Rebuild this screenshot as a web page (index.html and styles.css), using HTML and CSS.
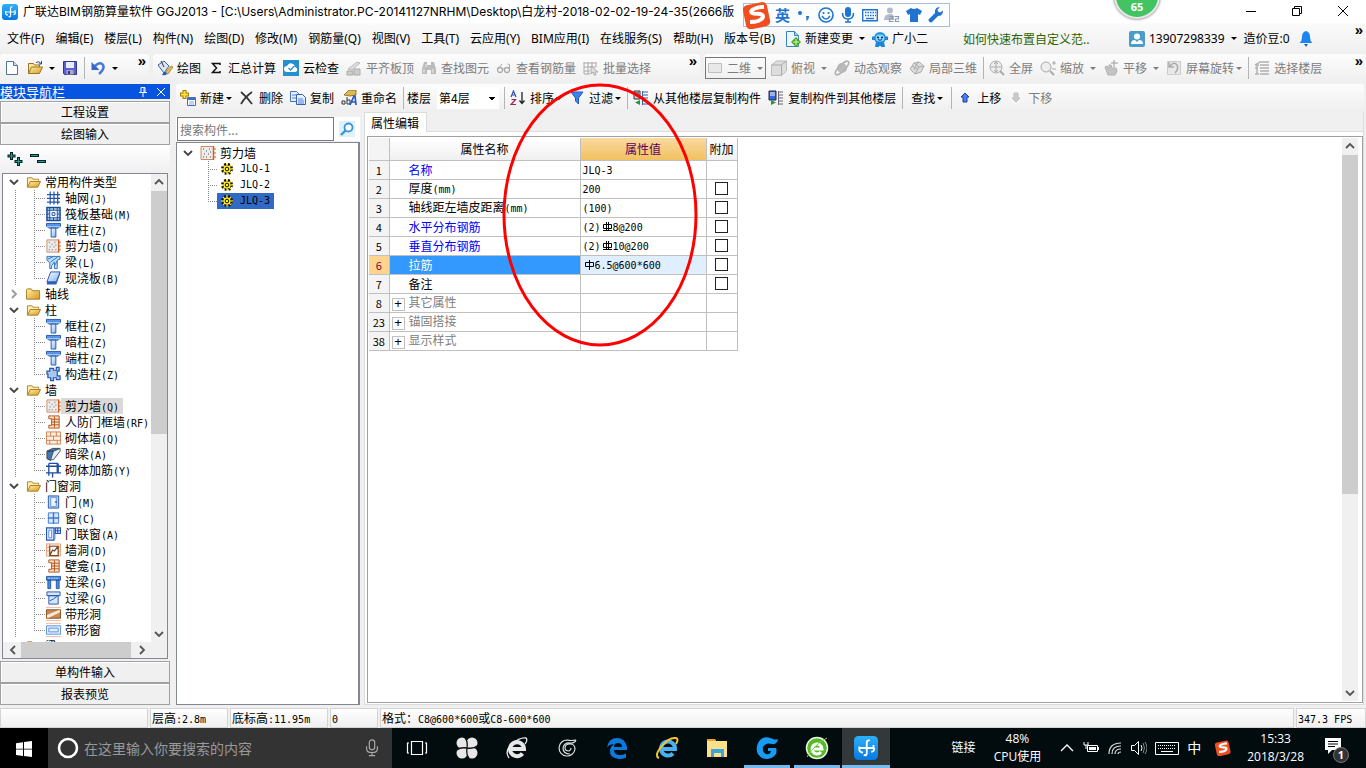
FILE: index.html
```
<!DOCTYPE html>
<html lang="zh-CN">
<head>
<meta charset="utf-8">
<title>广联达BIM钢筋算量软件 GGJ2013</title>
<link rel="stylesheet" href="styles.css">
</head>
<body>
<svg class="defs" aria-hidden="true">
<defs>
<linearGradient id="gBlue" x2="0" y2="1"><stop offset="0" stop-color="#2cb0f8"/><stop offset="1" stop-color="#0878e0"/></linearGradient>
<linearGradient id="gFold" x2="1" y2="1"><stop offset="0" stop-color="#fff0a8"/><stop offset="1" stop-color="#d89a20"/></linearGradient>
<linearGradient id="gGlass" x2="1" y2="1"><stop offset="0" stop-color="#fff"/><stop offset="1" stop-color="#7fb2f0"/></linearGradient>
</defs>
<symbol id="app" viewBox="0 0 16 16"><rect width="16" height="16" rx="3" fill="url(#gBlue)"/><path d="M6.500 12.500q2 1 2-1V4.500q0-2 2-1.500M3.500 7v1h9.500V6M3.500 8.500q0 2.500 2.500 2.500M11.500 10.500q2 0 2-2.500" fill="none" stroke="#fff" stroke-width="1.200"/></symbol>
<symbol id="doc" viewBox="0 0 16 16"><path d="M2.500 1.500h7l4 4v9h-11z" fill="#fff" stroke="#5570a0"/><path d="M9.500 1.500v4h4" fill="#cfe0f8" stroke="#5570a0"/></symbol>
<symbol id="open" viewBox="0 0 16 16"><path d="M1.500 13.500v-10h5l1 1.500h5v2" fill="#ffe79a" stroke="#9b7420"/><path d="M1.500 13.500l3-6.500h11l-3 6.500z" fill="url(#gFold)" stroke="#9b7420"/><path d="M9 2.500q3-2 5 1M14.500 1v3h-3" fill="none" stroke="#446"/></symbol>
<symbol id="fold" viewBox="0 0 16 16"><path d="M1.500 13.500v-10h5l1 1.500h6v2" fill="#ffeeb0" stroke="#b08428"/><path d="M1.500 13.500l3-6h11l-3 6z" fill="url(#gFold)" stroke="#a87a20"/></symbol>
<symbol id="foldc" viewBox="0 0 16 16"><path d="M.500 13.500v-10l1-1h4l1.500 2h7.500v9z" fill="url(#gFold)" stroke="#a87a20"/></symbol>
<symbol id="save" viewBox="0 0 16 16"><path d="M1.500 1.500h13v13h-12l-1-1z" fill="#5a60d0" stroke="#303690"/><path d="M4 2h8v6H4z" fill="#e8ecff"/><path d="M4.500 10h7v4.500h-7z" fill="#aab"/><path d="M6 11h2v3H6z" fill="#303690"/></symbol>
<symbol id="undo" viewBox="0 0 16 16"><path d="M5 6q5-5 8-1 2 4-4 9" fill="none" stroke="#4a7ad8" stroke-width="2.600"/><path d="M1.500 2v8h8z" fill="#3566c8"/></symbol>
<symbol id="paint" viewBox="0 0 16 16"><path d="M1 5l6-4 5 5-5 7z" fill="#dbe5f5" stroke="#406090"/><path d="M4 1l3 6" stroke="#333"/><path d="M8 13l6-7 2 1-5 7z" fill="#e8c050" stroke="#806010" stroke-width=".6"/><path d="M5 15q2-5 5-2 0 3-5 2z" fill="#2460b8"/></symbol>
<symbol id="sigma" viewBox="0 0 16 16"><path d="M12 5V3.500H4.500L8.500 8l-4 4.500H12V11" fill="none" stroke="#111" stroke-width="1.500"/></symbol>
<symbol id="cloud" viewBox="0 0 16 16"><rect width="16" height="16" fill="#258fd0"/><path d="M4 12a3 3 0 0 1 0-6q2-4 6-2 2 1 2 3 3 1 2 4-1 1-2 1z" fill="#fff"/><path d="M5.500 8l2 2 4-4" fill="none" stroke="#258fd0" stroke-width="1.300"/></symbol>
<symbol id="slab" viewBox="0 0 16 16"><path d="M2 9l9-7 3 1-8 7z" fill="#ddd" stroke="#bbb"/><path d="M1 11h6v4H1zM8 9h6v6H8z" fill="#ccc" stroke="#aaa"/></symbol>
<symbol id="bino" viewBox="0 0 16 16"><path d="M3 2h3v3h4V2h3l2 7v5h-5v-4H6v4H1V9z" fill="#bbb"/><path d="M3 9v4M12 9v4M5 4v3" stroke="#eee"/></symbol>
<symbol id="glasses" viewBox="0 0 16 16"><circle cx="4" cy="10" r="2.500" fill="none" stroke="#aaa" stroke-width="1.300"/><circle cx="11" cy="10" r="2.500" fill="none" stroke="#aaa" stroke-width="1.300"/><path d="M2 9l4-5M13.500 10V4.500l-2-.5M6.500 9h2" fill="none" stroke="#aaa"/></symbol>
<symbol id="batch" viewBox="0 0 16 16"><path d="M1 2v12M5 2v12M9 2v5M1 3h12M1 7h12M1 11h6M1 14h6M13 2v5" stroke="#aaa" fill="none"/><path d="M8 6l7 6h-3l1 3h-2l-1-3-2 2z" fill="#ddd" stroke="#999" stroke-width=".7"/></symbol>
<symbol id="rect" viewBox="0 0 16 16"><path d="M1.500 3.500h13v9h-13z" fill="#e8e8e8" stroke="#c0c0c0"/></symbol>
<symbol id="cube" viewBox="0 0 16 16"><path d="M.500 5l5-4h10v10l-5 4.500H.500z" fill="#ddd" stroke="#bbb"/><path d="M.500 5h10v10.500M10.500 5l5-4" stroke="#aaa" fill="none"/></symbol>
<symbol id="orbit" viewBox="0 0 16 16"><circle cx="8" cy="8" r="5" fill="#bbb"/><ellipse cx="8" cy="8" rx="9" ry="3" transform="rotate(-45 8 8)" fill="none" stroke="#b4b4b4" stroke-width="1.500"/></symbol>
<symbol id="part" viewBox="0 0 16 16"><path d="M1 9l4-6 5-1 5 4-3 6-6 2z" fill="#ddd" stroke="#aaa"/><path d="M5 3l5 4-4 7M10 7l5-1M3 6l6 3M9 2l-4 8" stroke="#aaa" fill="none"/></symbol>
<symbol id="full" viewBox="0 0 16 16"><circle cx="7" cy="7" r="6" fill="#eee" stroke="#aaa"/><path d="M7 2v10M2 7h10M5 4l2-2 2 2M5 10l2 2 2-2" fill="none" stroke="#aaa"/><path d="M11 11l4 4" stroke="#aaa" stroke-width="2"/></symbol>
<symbol id="zoom" viewBox="0 0 16 16"><circle cx="6" cy="7" r="5" fill="#eee" stroke="#aaa"/><path d="M10 11l4 4" stroke="#aaa" stroke-width="2"/><path d="M12 3h4M14 1v4M12 9h4" stroke="#aaa"/></symbol>
<symbol id="pan" viewBox="0 0 16 16"><path d="M2 7l2-1 2 3V5h2l1 3h4l1 3-2 4H5z" fill="#c4c4c4" stroke="#b0b0b0"/><path d="M11 0v7M8 3h7" stroke="#999"/></symbol>
<symbol id="rot" viewBox="0 0 16 16"><path d="M1.500 1.500h13v13h-13z" fill="#e8e8e8" stroke="#ccc"/><path d="M4 6q4-5 7-1 2 4-2 8M3 2v5h5" fill="none" stroke="#aaa" stroke-width="1.500"/></symbol>
<symbol id="floors" viewBox="0 0 16 16"><path d="M1 5l5-3h9M1 5h4M6 5h9M6 8h9M6 11h9M6 14h9M1 8h3M3 5v9M1 14h4" stroke="#b0b0b0" stroke-width="1.400" fill="none"/></symbol>
<symbol id="new" viewBox="0 0 16 16"><path d="M4.500 0v9M0 4.500h9" stroke="#a08000" stroke-width="4"/><path d="M4.500 1v7M1 4.500h7" stroke="#ffe040" stroke-width="2"/><path d="M7.500 7.500h8v8h-8z" fill="#fff" stroke="#4070c0"/><path d="M8 9h7" stroke="#4070c0" stroke-width="2"/><path d="M9 12h5M9 14h5" stroke="#88a8e0"/></symbol>
<symbol id="x" viewBox="0 0 16 16"><path d="M2 2q6 5 11 12M13 2Q6 7 2 14" fill="none" stroke="#333" stroke-width="1.700"/></symbol>
<symbol id="copy" viewBox="0 0 16 16"><path d="M.500 1.500h6l3 3v7h-9z" fill="#e5efff" stroke="#4a70b8"/><path d="M6.500 4.500h6l3 3v7h-9z" fill="#e5efff" stroke="#3560b0"/><path d="M2 5h4M2 8h4M8 9h5M8 11h6M8 13h6" stroke="#5580d0"/></symbol>
<symbol id="rename" viewBox="0 0 16 16"><path d="M3 5l5-5h7v5l-6 1z" fill="#e0b850" stroke="#806020" stroke-width=".8"/><path d="M1 14v-3h3v3zM6 7v7h3v-4H6" fill="none" stroke="#333"/><path d="M9 15l4-9h1l1 9M11 12h4" fill="none" stroke="#2558c0" stroke-width="1.700"/></symbol>
<symbol id="sort" viewBox="0 0 16 16"><path d="M1 7l2.500-6L6 7M2 5h3" fill="none" stroke="#3050b0" stroke-width="1.200"/><path d="M1.500 9.500h4L1 14.500h5" fill="none" stroke="#a02050" stroke-width="1.200"/><path d="M12 2v11M9.500 10.500l2.500 3 2.500-3" fill="none" stroke="#222" stroke-width="1.300"/></symbol>
<symbol id="filter" viewBox="0 0 16 16"><path d="M2 2h12l-4.500 6v6L6.500 11V8z" fill="#3d82e8" stroke="#205cc0"/></symbol>
<symbol id="cpf" viewBox="0 0 16 16"><path d="M1 1h6v8H1z" fill="#ccd" stroke="#334"/><path d="M9 2h6M9 5h6M9 8h6M9 11h6M9 14h6M9.500 1v14" stroke="#3a62aa"/><path d="M2 3h4M2 5h4" stroke="#333"/><path d="M7 10v5l-5-2.500z" fill="#1a9c30"/></symbol>
<symbol id="cpt" viewBox="0 0 16 16"><path d="M1 1h7v9H1z" fill="#3768d8" stroke="#224"/><path d="M2 3h5M2 5h5" stroke="#fff"/><path d="M10 2h5M10 5h5M10 8h5M10 11h5M10 14h5M10.500 1v14" stroke="#667"/><path d="M3 10v5l5-2.500z" fill="#1a9c30"/></symbol>
<symbol id="up" viewBox="0 0 16 16"><path d="M8 3l4 4h-2v5H6V7H4z" fill="#4a80f0" stroke="#1c3c98"/></symbol>
<symbol id="down" viewBox="0 0 16 16"><path d="M8 12l4-4h-2V3H6v5H4z" fill="#ccc" stroke="#bbb"/></symbol>
<symbol id="docadd" viewBox="0 0 16 16"><path d="M1.500.500h8l4 4v11h-12z" fill="#eaf6ff" stroke="#3a80b8"/><path d="M9.500.500v4h4" fill="#9cd0f0" stroke="#3a80b8"/><path d="M11 6l5 5-5 5-5-5z" fill="#48a818"/><path d="M11 8v6M8 11h6" stroke="#dff5c8"/></symbol>
<symbol id="mascot" viewBox="0 0 16 16"><circle cx="8" cy="7" r="6" fill="#2196e8"/><path d="M0 5.500h16v3.500H0zM4 11h8l1 5H9v-1H7v1H3z" fill="#1a86d8"/><ellipse cx="8" cy="7" rx="4.500" ry="3.500" fill="#8fd6ff"/><circle cx="6" cy="6.500" r="1" fill="#123"/><circle cx="10" cy="6.500" r="1" fill="#123"/><path d="M6 8.500q2 1.500 4 0" stroke="#135" fill="none"/></symbol>
<symbol id="user" viewBox="0 0 16 16"><rect width="16" height="16" rx="2" fill="#4a9dc8"/><circle cx="8" cy="5.500" r="3" fill="#fff"/><path d="M2 13q0-4 4-4l2 2 2-2q4 0 4 4z" fill="#fff"/></symbol>
<symbol id="bell" viewBox="0 0 16 16"><path d="M8 0q4 1 4 6 0 4 2.500 6h-13Q4 10 4 6q0-5 4-6z" fill="#1b86f0"/><path d="M6 13h4l-2 3z" fill="#1b60c0"/></symbol>
<symbol id="pin" viewBox="0 0 10 10"><path d="M3 .500h4v5H3zM6 1v4M1 5.500h8M5 6v4" fill="none" stroke="#fff"/></symbol>
<symbol id="close" viewBox="0 0 10 10"><path d="M1 1l8 8M9 1L1 9" fill="none" stroke="currentColor"/></symbol>
<symbol id="plus2" viewBox="0 0 16 16"><path d="M4.500 1v8M.500 5h8M11.500 6v9M7.500 10.500h8" stroke="#022" stroke-width="3"/><path d="M4.500 2v6M1.500 5h6M11.500 7v7M8.500 10.500h6" stroke="#2a9a90"/></symbol>
<symbol id="minus2" viewBox="0 0 16 16"><path d="M0 4.500h9M7 10.500h9" stroke="#022" stroke-width="3"/><path d="M1 4.500h7M8 10.500h7" stroke="#2a9a90"/></symbol>
<symbol id="cdown" viewBox="0 0 10 10"><path d="M1 3l4 4 4-4" fill="none" stroke="currentColor" stroke-width="1.800"/></symbol>
<symbol id="grid" viewBox="0 0 16 16"><path d="M4.500 1v14M8.500 1v14M12.500 1v14M1 4.500h14M1 8.500h14M1 12.500h14" stroke="#2456a8" stroke-width="1.300"/></symbol>
<symbol id="raft" viewBox="0 0 16 16"><path d="M1 1h14v14H1z" fill="#b8d8f8" stroke="#1c4c98" stroke-width="1.600"/><path d="M4 4h8v8H4zM6.500 6.500h3v3h-3zM4 1v3M8 1v3M12 1v3M4 12v3M8 12v3M12 12v3M1 4h3M1 8h3M1 12h3M12 4h3M12 8h3M12 12h3" fill="#fff" stroke="#1c4c98"/></symbol>
<symbol id="col" viewBox="0 0 16 16"><path d="M.500 1h15v3l-3 2h-9l-3-2z" fill="#5a94e4" stroke="#2456a8"/><path d="M1 4.500h14" stroke="#bcd8ff"/><path d="M5.500 6h5v9.500h-5z" fill="url(#gGlass)" stroke="#2456a8"/></symbol>
<symbol id="wall" viewBox="0 0 16 16"><path d="M1 1.500h12.500v13H1z" fill="#ececec" stroke="#d08868"/><path d="M13.500 1v14" stroke="#d06020" stroke-width="1.500"/><path d="M13 4h3M13 8h3M13 12h3" stroke="#d06020"/><path d="M3 4h1M6 6h1M9 4h1M4 9h1M8 9h1M6 12h1M3 12h1M10 12h1M10 7h1" stroke="#555"/></symbol>
<symbol id="beam" viewBox="0 0 16 16"><path d="M1 2h14v3l-3 1v9H9V8l-3 4v3H4V9L1 6z" fill="#b8dcf8" stroke="#3070c0"/><path d="M2 5l6-3M5 8l8-6M9 12l3-5" stroke="#3070c0"/></symbol>
<symbol id="plate" viewBox="0 0 16 16"><path d="M1 12v3h10l4-11V1.500L11 12z" fill="#2a62c0"/><path d="M5 1.500h10l-4 10.500H1z" fill="url(#gGlass)" stroke="#2456a8"/></symbol>
<symbol id="ccol" viewBox="0 0 16 16"><path d="M4 2h4v2h3V1h3v4h-2v5h3v4h-4v-2H8v3H5v-3H2V8H1V5h3z" fill="#a8c8f4" stroke="#2456a8" stroke-width="1.300"/></symbol>
<symbol id="ibeam" viewBox="0 0 16 16"><path d="M3 1.500h11v13H3v-3h3v-7H3zM9 2v12M6 5h8M6 8h8M6 11h8" fill="#fbe3cf" stroke="#b05018"/></symbol>
<symbol id="brick" viewBox="0 0 16 16"><path d="M.500 1.500h15v13H.500zM.500 6h15M.500 10.500h15M5 1.500V6M11 1.500V6M8 6v4.500M4 10.500v4M12 10.500v4" fill="#fdeee0" stroke="#d08050"/></symbol>
<symbol id="dbeam" viewBox="0 0 16 16"><path d="M1 5l6-3h8l-7 3zM1 5h7v3l-3 7-4-2z" fill="#4676b0" stroke="#345"/><path d="M8 5l7-3v3l-7 9H5z" fill="#e4eef8" stroke="#456"/></symbol>
<symbol id="rebar" viewBox="0 0 16 16"><path d="M0 4h16M0 11h16M3 1v13M13 1v10M6 1h6v10H7v5M3 1h6" stroke="#1c4ca8" fill="none" stroke-width="1.400"/></symbol>
<symbol id="door" viewBox="0 0 16 16"><path d="M2.500 1.500h11v13h-11z" fill="#b8d4fa" stroke="#2456a8"/><path d="M5 3h6v10H5z" fill="#e8f2ff" stroke="#6090d8"/><path d="M9.500 8h2" stroke="#124"/></symbol>
<symbol id="win" viewBox="0 0 16 16"><path d="M2.500 2.500h11v11h-11z" fill="#d8e8ff" stroke="#3a78d0"/><path d="M8 2v12M2 8h12" stroke="#3a78d0" stroke-width="1.500"/></symbol>
<symbol id="dwin" viewBox="0 0 16 16"><path d="M.500 1.500h8v13h-8zM10 1.500h5.500v6H10zM12.500 2v5M10 4.500h5" fill="#d8e8ff" stroke="#2456b8" stroke-width="1.200"/><path d="M3 4h3v8H3zM9.500 8v6" fill="#fff" stroke="#5a8cdc"/></symbol>
<symbol id="hole" viewBox="0 0 16 16"><path d="M.500 1.500h15v13H.500zM0 5h16M0 9h16M4 1v4" fill="#fbe8d8" stroke="#e0a080"/><path d="M4 4h9v10H4zM4 14l3-6 2 1 4-5" fill="#fff" stroke="#74441c" stroke-width="1.300"/></symbol>
<symbol id="lbeam" viewBox="0 0 16 16"><path d="M.500 2h15v4H.500zM2 6h3v9H2zM11 6h3v9h-3z" fill="#4d8adf" stroke="#2456a8"/><path d="M2 4h12" stroke="#cde" stroke-dasharray="2 1"/></symbol>
<symbol id="gbeam" viewBox="0 0 16 16"><path d="M1 1.500h14v4H1zM3 5.500h10v9H3z" fill="#d4e6ff" stroke="#2456a8"/><path d="M4 11l4-2 4-3" stroke="#2456a8" fill="none"/></symbol>
<symbol id="strip" viewBox="0 0 16 16"><path d="M.500 3.500h15v9H.500z" fill="#c98a58" stroke="#8a4a18"/><path d="M1 9l12-5h2v2L3 12H1z" fill="#f8e8d8"/><path d="M0 1h16M0 15h16" stroke="#f0b8a0"/></symbol>
<symbol id="swin" viewBox="0 0 16 16"><path d="M.500 3.500h15v9H.500zM3 6h10v4H3z" fill="#e4efff" stroke="#5a90e0"/><path d="M0 1h16M0 15h16" stroke="#f0b8a0"/></symbol>
<symbol id="gear" viewBox="0 0 16 16"><circle cx="8" cy="8" r="5" fill="none" stroke="#111" stroke-width="2" stroke-dasharray="2 2"/><circle cx="8" cy="8" r="4" fill="#ffee20" stroke="#554c00"/><path d="M8 2v12M2 8h12M4 4l8 8M12 4l-8 8" stroke="#ffee20"/><circle cx="8" cy="8" r="1.800" fill="#ffee20" stroke="#111"/></symbol>
<symbol id="mag" viewBox="0 0 16 16"><path d="M0 0h16v16H0z" fill="#e0f1fc"/><circle cx="9.500" cy="6.500" r="4" fill="#fff" stroke="#3a94dc" stroke-width="1.800"/><path d="M6.500 9.500L2 14" stroke="#3a94dc" stroke-width="2.400"/></symbol>
<symbol id="mic" viewBox="0 0 16 20"><rect x="5" y="1" width="6" height="11" rx="3" fill="none" stroke="currentColor" stroke-width="1.300"/><path d="M2 8v3q0 4 6 4t6-4V8M8 15v4M4.500 18.500h7" fill="none" stroke="currentColor" stroke-width="1.300"/></symbol>
<symbol id="sogou" viewBox="0 0 24 24"><rect x="1" y="2" width="21" height="21" rx="4" transform="rotate(-12 12 12)" fill="#f04e20"/><path d="M18 5q-10 1-11 4 0 2 5 2 6 0 5 3-2 4-11 4" fill="none" stroke="#fff" stroke-width="3.400"/></symbol>
</svg>

<header class="title">
  <svg class="ic"><use href="#app"/></svg>
  <h1>广联达BIM钢筋算量软件 GGJ2013 - [C:\Users\Administrator.PC-20141127NRHM\Desktop\白龙村-2018-02-02-19-24-35(2666版</h1>
  <div class="winbtns">
    <button aria-label="最小化"><svg viewBox="0 0 12 12"><path d="M1 6.500h10" stroke="#000"/></svg></button>
    <button aria-label="还原"><svg viewBox="0 0 12 12"><path d="M1.500 3.500h7v7h-7zM3.500 3V1.500h7v7H9" fill="none" stroke="#000"/></svg></button>
    <button aria-label="关闭"><svg viewBox="0 0 12 12"><path d="M1 1l10 10M11 1L1 11" stroke="#000"/></svg></button>
  </div>
</header>

<nav class="menubar">
  <div class="menus">
    <button>文件(F)</button><button>编辑(E)</button><button>楼层(L)</button><button>构件(N)</button><button>绘图(D)</button><button>修改(M)</button><button>钢筋量(Q)</button><button>视图(V)</button><button>工具(T)</button><button>云应用(Y)</button><button>BIM应用(I)</button><button>在线服务(S)</button><button>帮助(H)</button><button>版本号(B)</button>
  </div>
  <button class="tb"><svg class="ic"><use href="#docadd"/></svg>新建变更<i class="arr"></i></button>
  <button class="tb"><svg class="ic"><use href="#mascot"/></svg>广小二</button>
  <a class="tip" href="#">如何快速布置自定义范..</a>
  <div class="account">
    <button class="tb"><svg class="ic"><use href="#user"/></svg>13907298339<i class="arr"></i></button>
    <button class="tb">造价豆:0</button>
    <svg class="ic"><use href="#bell"/></svg>
    <span class="more">»</span>
  </div>
</nav>

<div class="toolbars">
  <div class="bar files">
    <button class="tb" aria-label="新建"><svg class="ic"><use href="#doc"/></svg></button>
    <button class="tb" aria-label="打开"><svg class="ic"><use href="#open"/></svg><i class="arr"></i></button>
    <button class="tb" aria-label="保存"><svg class="ic"><use href="#save"/></svg></button>
    <span class="sep"></span>
    <button class="tb" aria-label="撤销"><svg class="ic"><use href="#undo"/></svg><i class="arr"></i></button>
    <span class="more">»</span>
  </div>
  <div class="bar tools">
    <button class="tb"><svg class="ic"><use href="#paint"/></svg>绘图</button>
    <button class="tb"><svg class="ic"><use href="#sigma"/></svg>汇总计算</button>
    <button class="tb"><svg class="ic"><use href="#cloud"/></svg>云检查</button>
    <button class="tb off"><svg class="ic"><use href="#slab"/></svg>平齐板顶</button>
    <button class="tb off"><svg class="ic"><use href="#bino"/></svg>查找图元</button>
    <button class="tb off"><svg class="ic"><use href="#glasses"/></svg>查看钢筋量</button>
    <button class="tb off"><svg class="ic"><use href="#batch"/></svg>批量选择</button>
    <span class="more">»</span>
  </div>
  <div class="bar views">
    <button class="tb off boxed"><svg class="ic"><use href="#rect"/></svg>二维<i class="arr"></i></button>
    <button class="tb off"><svg class="ic"><use href="#cube"/></svg>俯视<i class="arr"></i></button>
    <button class="tb off"><svg class="ic"><use href="#orbit"/></svg>动态观察</button>
    <button class="tb off"><svg class="ic"><use href="#part"/></svg>局部三维</button>
    <span class="sep"></span>
    <button class="tb off"><svg class="ic"><use href="#full"/></svg>全屏</button>
    <button class="tb off"><svg class="ic"><use href="#zoom"/></svg>缩放<i class="arr"></i></button>
    <button class="tb off"><svg class="ic"><use href="#pan"/></svg>平移<i class="arr"></i></button>
    <button class="tb off tight"><svg class="ic"><use href="#rot"/></svg>屏幕旋转<i class="arr"></i></button>
    <span class="sep"></span>
    <button class="tb off"><svg class="ic"><use href="#floors"/></svg>选择楼层</button>
    <span class="more">»</span>
  </div>
</div>

<div class="work">
  <aside class="nav">
    <h2>模块导航栏<svg><use href="#pin"/></svg><svg><use href="#close"/></svg></h2>
    <button class="section">工程设置</button>
    <button class="section">绘图输入</button>
    <div class="navtools"><svg class="ic"><use href="#plus2"/></svg><svg class="ic"><use href="#minus2"/></svg></div>
    <div class="treebox">
      <div class="treeview">
        <ul class="tree">
          <li><div class="root"><svg class="chev"><use href="#cdown"/></svg><svg class="ic"><use href="#fold"/></svg>常用构件类型</div>
            <ul>
              <li><svg class="ic"><use href="#grid"/></svg><span>轴网<b>(J)</b></span></li>
              <li><svg class="ic"><use href="#raft"/></svg><span>筏板基础<b>(M)</b></span></li>
              <li><svg class="ic"><use href="#col"/></svg><span>框柱<b>(Z)</b></span></li>
              <li><svg class="ic"><use href="#wall"/></svg><span>剪力墙<b>(Q)</b></span></li>
              <li><svg class="ic"><use href="#beam"/></svg><span>梁<b>(L)</b></span></li>
              <li><svg class="ic"><use href="#plate"/></svg><span>现浇板<b>(B)</b></span></li>
            </ul></li>
          <li><div class="root"><svg class="chev shut"><use href="#cdown"/></svg><svg class="ic"><use href="#foldc"/></svg>轴线</div></li>
          <li><div class="root"><svg class="chev"><use href="#cdown"/></svg><svg class="ic"><use href="#fold"/></svg>柱</div>
            <ul>
              <li><svg class="ic"><use href="#col"/></svg><span>框柱<b>(Z)</b></span></li>
              <li><svg class="ic"><use href="#col"/></svg><span>暗柱<b>(Z)</b></span></li>
              <li><svg class="ic"><use href="#col"/></svg><span>端柱<b>(Z)</b></span></li>
              <li><svg class="ic"><use href="#ccol"/></svg><span>构造柱<b>(Z)</b></span></li>
            </ul></li>
          <li><div class="root"><svg class="chev"><use href="#cdown"/></svg><svg class="ic"><use href="#fold"/></svg>墙</div>
            <ul>
              <li><svg class="ic"><use href="#wall"/></svg><span class="cur">剪力墙<b>(Q)</b></span></li>
              <li><svg class="ic"><use href="#ibeam"/></svg><span>人防门框墙<b>(RF)</b></span></li>
              <li><svg class="ic"><use href="#brick"/></svg><span>砌体墙<b>(Q)</b></span></li>
              <li><svg class="ic"><use href="#dbeam"/></svg><span>暗梁<b>(A)</b></span></li>
              <li><svg class="ic"><use href="#rebar"/></svg><span>砌体加筋<b>(Y)</b></span></li>
            </ul></li>
          <li><div class="root"><svg class="chev"><use href="#cdown"/></svg><svg class="ic"><use href="#fold"/></svg>门窗洞</div>
            <ul>
              <li><svg class="ic"><use href="#door"/></svg><span>门<b>(M)</b></span></li>
              <li><svg class="ic"><use href="#win"/></svg><span>窗<b>(C)</b></span></li>
              <li><svg class="ic"><use href="#dwin"/></svg><span>门联窗<b>(A)</b></span></li>
              <li><svg class="ic"><use href="#hole"/></svg><span>墙洞<b>(D)</b></span></li>
              <li><svg class="ic"><use href="#ibeam"/></svg><span>壁龛<b>(I)</b></span></li>
              <li><svg class="ic"><use href="#lbeam"/></svg><span>连梁<b>(G)</b></span></li>
              <li><svg class="ic"><use href="#gbeam"/></svg><span>过梁<b>(G)</b></span></li>
              <li><svg class="ic"><use href="#strip"/></svg><span>带形洞</span></li>
              <li><svg class="ic"><use href="#swin"/></svg><span>带形窗</span></li>
            </ul></li>
          <li><div class="root"><svg class="chev"><use href="#cdown"/></svg><svg class="ic"><use href="#fold"/></svg>梁</div></li>
        </ul>
      </div>
      <div class="vbar"><svg class="u"><use href="#cdown"/></svg><div class="track"><div class="thumb half"></div></div><svg><use href="#cdown"/></svg></div>
      <div class="hbar"><svg class="l"><use href="#cdown"/></svg><div class="track"><div class="thumb"></div></div><svg class="r"><use href="#cdown"/></svg></div>
    </div>
    <button class="section">单构件输入</button>
    <button class="section">报表预览</button>
  </aside>

  <main>
    <div class="bar edit">
      <button class="tb tight"><svg class="ic"><use href="#new"/></svg>新建<i class="arr"></i></button>
      <button class="tb"><svg class="ic"><use href="#x"/></svg>删除</button>
      <button class="tb"><svg class="ic"><use href="#copy"/></svg>复制</button>
      <button class="tb"><svg class="ic"><use href="#rename"/></svg>重命名</button>
      <span class="sep"></span>
      <label for="floor">楼层</label>
      <select id="floor"><option>第4层</option></select>
      <span class="sep"></span>
      <button class="tb tight"><svg class="ic"><use href="#sort"/></svg>排序<i class="arr"></i></button>
      <button class="tb tight"><svg class="ic"><use href="#filter"/></svg>过滤<i class="arr"></i></button>
      <span class="sep"></span>
      <button class="tb"><svg class="ic"><use href="#cpf"/></svg>从其他楼层复制构件</button>
      <button class="tb"><svg class="ic"><use href="#cpt"/></svg>复制构件到其他楼层</button>
      <span class="sep"></span>
      <button class="tb tight plain">查找<i class="arr"></i></button>
      <span class="sep"></span>
      <button class="tb"><svg class="ic"><use href="#up"/></svg>上移</button>
      <button class="tb off"><svg class="ic"><use href="#down"/></svg>下移</button>
    </div>
    <div class="panes">
      <section class="comps">
        <div class="search"><input type="text" placeholder="搜索构件..." aria-label="搜索构件"><button aria-label="搜索"><svg class="ic"><use href="#mag"/></svg></button></div>
        <div class="list">
          <div class="root"><svg class="chev"><use href="#cdown"/></svg><svg class="ic"><use href="#wall"/></svg>剪力墙</div>
          <ul>
            <li><div><svg class="ic"><use href="#gear"/></svg><b>JLQ-1</b></div></li>
            <li><div><svg class="ic"><use href="#gear"/></svg><b>JLQ-2</b></div></li>
            <li><div class="sel"><svg class="ic"><use href="#gear"/></svg><b>JLQ-3</b></div></li>
          </ul>
        </div>
      </section>
      <section class="props">
        <div class="tabs"><button>属性编辑</button></div>
        <div class="sheet">
          <table>
            <colgroup><col class="c1"><col class="c2"><col class="c3"><col class="c4"></colgroup>
            <thead><tr><th></th><th>属性名称</th><th class="hot">属性值</th><th>附加</th></tr></thead>
            <tbody>
              <tr><th>1</th><td class="blue">名称</td><td><b>JLQ-3</b></td><td></td></tr>
              <tr><th>2</th><td>厚度<b>(mm)</b></td><td><b>200</b></td><td><input type="checkbox" aria-label="厚度"></td></tr>
              <tr><th>3</th><td>轴线距左墙皮距离<b>(mm)</b></td><td><b>(100)</b></td><td><input type="checkbox" aria-label="轴线距左墙皮距离"></td></tr>
              <tr><th>4</th><td class="blue">水平分布钢筋</td><td><b>(2)</b><svg class="rb" viewBox="0 0 9 10"><path d="M.500 2.500h8v4h-8zM3.500 0v9M5.500 0v9M0 8.500h9" fill="none" stroke="#000"/></svg><b>8@200</b></td><td><input type="checkbox" aria-label="水平分布钢筋"></td></tr>
              <tr><th>5</th><td class="blue">垂直分布钢筋</td><td><b>(2)</b><svg class="rb" viewBox="0 0 9 10"><path d="M.500 2.500h8v4h-8zM3.500 0v9M5.500 0v9M0 8.500h9" fill="none" stroke="#000"/></svg><b>10@200</b></td><td><input type="checkbox" aria-label="垂直分布钢筋"></td></tr>
              <tr class="active"><th>6</th><td>拉筋</td><td><svg class="rb" viewBox="0 0 9 10"><path d="M.500 2.500h8v4h-8zM4.500 0v10" fill="none" stroke="#000"/></svg><b>6.5@600*600</b></td><td><input type="checkbox" aria-label="拉筋"></td></tr>
              <tr><th>7</th><td>备注</td><td></td><td><input type="checkbox" aria-label="备注"></td></tr>
              <tr class="fold"><th>8</th><td><button>+</button>其它属性</td><td></td><td></td></tr>
              <tr class="fold"><th>23</th><td><button>+</button>锚固搭接</td><td></td><td></td></tr>
              <tr class="fold"><th>38</th><td><button>+</button>显示样式</td><td></td><td></td></tr>
            </tbody>
          </table>
          <div class="vbar"><svg class="u"><use href="#cdown"/></svg><div class="track"><div class="thumb most"></div></div><svg><use href="#cdown"/></svg></div>
        </div>
      </section>
    </div>
  </main>
</div>

<footer class="status">
  <span class="s1"></span><span class="s2">层高<b>:2.8m</b></span><span class="s3">底标高<b>:11.95m</b></span><span class="s4"><b>0</b></span><span class="s5">格式：<b>C8@600*600</b>或<b>C8-600*600</b></span><span class="s6"><b>347.3 FPS</b></span>
</footer>

<div class="taskbar">
  <button class="start" aria-label="开始"><svg viewBox="0 0 16 16"><path d="M0 2.200l7-1v6.500H0zM8 1l8-1v7.700H8zM0 8.500h7V15l-7-1zM8 8.500h8V16l-8-1z" fill="#fff"/></svg></button>
  <div class="cortana"><svg class="ring" viewBox="0 0 22 22"><circle cx="11" cy="11" r="9" fill="none" stroke="#fff" stroke-width="2.600"/></svg><input type="text" placeholder="在这里输入你要搜索的内容" aria-label="搜索"><svg class="mic"><use href="#mic"/></svg></div>
  <button class="app" aria-label="任务视图"><svg viewBox="0 0 24 24"><path d="M6.500 5.500h11v13h-11zM4 7H2.500v10H4M20 7h1.500v10H20" fill="none" stroke="#fff" stroke-width="1.200"/></svg></button>
  <button class="app" aria-label="四叶"><svg viewBox="0 0 24 24"><g fill="#e8e8e8"><circle cx="7" cy="7" r="5.500"/><circle cx="17" cy="7" r="5.500"/><circle cx="7" cy="17" r="5.500"/><circle cx="17" cy="17" r="5.500"/><path d="M8 8h8v8H8z"/></g><path d="M12 12Q13 5 10 2M12 12q7 1 10-2M12 12q-1 7 2 10M12 12q-7-1-10 2" fill="none" stroke="#111" stroke-width="1.300"/></svg></button>
  <button class="app" aria-label="浏览器"><svg viewBox="0 0 24 24"><path d="M5 13h14a7 7 0 1 0-1.500 4.500" fill="none" stroke="#e8e8e8" stroke-width="4"/><path d="M4 22Q-1 15 7 8q8-7 14-6 2 2-1 6" fill="none" stroke="#e8e8e8" stroke-width="1.300"/></svg></button>
  <button class="app" aria-label="G"><svg viewBox="0 0 24 24"><path d="M21 4q-5 1-9 0a8 8 0 1 0 8 9q0-5-5-5-5 0-5 4 0 3 4 3 2-1 2-3M21 4q-1 3-5 3-7-1-8 5 0 6 7 6" fill="none" stroke="#ddd" stroke-width="1.200"/></svg></button>
  <button class="app" aria-label="Edge"><svg viewBox="0 0 24 24"><path d="M2 11Q4 2 12 2t10 9v3H9q0 5 6 5 3 0 6-1.500v4Q18 23 14 23 4 22 5 14q1-4 4-6-4 0-7 3zM9 11h8q0-4-4-4t-4 4z" fill="#0a7bdc" fill-rule="evenodd"/></svg></button>
  <button class="app" aria-label="IE"><svg viewBox="0 0 24 24"><path d="M6 13h14a7 7 0 1 0-2 4.500" fill="none" stroke="#4bb0f0" stroke-width="4"/><path d="M4 22Q-1 20 6 11q8-10 15-9 3 1 0 6" fill="none" stroke="#f4c430" stroke-width="2"/></svg></button>
  <button class="app" aria-label="资源管理器"><svg viewBox="0 0 24 24"><path d="M2 3h8l1 2h11v16H2z" fill="#ffe08a"/><path d="M2 3h8v2H2z" fill="#e8a830"/><path d="M6 21v-8h13v8h-3v-4H9v4z" fill="#38a4e0"/></svg></button>
  <button class="app run" aria-label="广联达"><svg viewBox="0 0 24 24"><path d="M23 3q-3 1-5 0Q8-2 3 7-1 17 7 22q9 3 14-4 1-4 0-6h-8v3h3q-1 4-5 3-4-2-3-7 3-5 9-3 5 1 6-5z" fill="#169cf4"/></svg></button>
  <button class="app run" aria-label="安全浏览器"><svg viewBox="0 0 24 24"><circle cx="12" cy="12" r="10.500" fill="#58b82c" stroke="#e8f8e0" stroke-width="1.500"/><path d="M7 13h10a5 5 0 1 0-1 3" fill="none" stroke="#fff" stroke-width="3"/><path d="M2 21Q10 8 22 2" stroke="#80d840" fill="none"/></svg></button>
  <button class="app run on" aria-label="钢筋算量"><svg><use href="#app"/></svg></button>
  <div class="tray">
    <span>链接</span>
    <span class="two">48%<br>CPU使用</span>
    <svg viewBox="0 0 16 16"><path d="M2 11l6-6 6 6" fill="none" stroke="#fff" stroke-width="1.300"/></svg>
    <svg viewBox="0 0 16 16"><path d="M4.500 5.500h10v6h-10zM15.500 7v3M1 2v3h4V2M3 5v4" fill="none" stroke="#fff"/><path d="M6 7h7v3H6z" fill="#fff"/></svg>
    <svg viewBox="0 0 16 16"><path d="M2 14Q2 3 14 3M5 14q0-8 9-8M8 14q0-5 6-5M11 14q0-2 3-2" fill="none" stroke="#ddd" stroke-width="1.200"/></svg>
    <svg viewBox="0 0 16 16"><path d="M.500 5.500h3l4-4v13l-4-4h-3zM10 5q2 3 0 6" fill="none" stroke="#fff"/><path d="M12 3q3 5 0 10M14 2q4 6 0 12" fill="none" stroke="#888"/></svg>
    <svg class="kb" viewBox="0 0 24 16"><path d="M.500 2.500h23v12H.500z" fill="none" stroke="#fff"/><path d="M3 5.500h18M3 8.500h18" stroke="#fff" stroke-dasharray="1 1"/><path d="M6 11.500h12" stroke="#fff"/></svg>
    <span class="zh">中</span>
    <svg><use href="#sogou"/></svg>
    <span class="two clock">15:33<br>2018/3/28</span>
    <span class="note"><svg viewBox="0 0 18 18"><path d="M1 1h16v12h-9l-4 4v-4H1z" fill="#fff"/><path d="M4 4.500h10M4 7h10M4 9.500h7" stroke="#000"/></svg><em>1</em></span>
  </div>
</div>

<div class="ime">
  <svg class="logo"><use href="#sogou"/></svg>
  <span>英</span>
  <svg viewBox="0 0 16 16"><circle cx="4" cy="6" r="2"/><path d="M10 9h3q0 4-3 5 1-2 0-5z"/></svg>
  <svg viewBox="0 0 16 16"><circle cx="8" cy="8" r="7" fill="none" stroke="#1f74d0" stroke-width="1.600"/><circle cx="5.500" cy="6" r="1.100"/><circle cx="10.500" cy="6" r="1.100"/><path d="M4 9q4 6 8 0" fill="none" stroke="#1f74d0" stroke-width="1.400"/></svg>
  <svg viewBox="0 0 16 16"><rect x="5" y="0" width="6" height="10" rx="3"/><path d="M2.500 6q0 6 5.500 6t5.500-6M8 12v3.500M5 15h6" fill="none" stroke="#1f74d0" stroke-width="1.500"/></svg>
  <svg viewBox="0 0 16 16"><path d="M.700 2.700h14.600v11H.700z" fill="none" stroke="#1f74d0" stroke-width="1.400"/><path d="M3 5.500h11M3 8.500h11" stroke="#1f74d0" stroke-width="1.600" stroke-dasharray="1.500 1"/><path d="M4 11.500h8" stroke="#1f74d0" stroke-width="1.400"/></svg>
  <svg viewBox="0 0 16 16"><g fill="#b4bcc8"><circle cx="6" cy="3.500" r="3"/><path d="M0 13q0-6 6-6 3 0 4 2v4z"/></g><path d="M5.500 9.500h3v2.500h-3v2.500h4M10.500 9.500h4v2.500h-3v2.500h4" fill="none" stroke="#8c98a8" stroke-width="1.200"/></svg>
  <svg viewBox="0 0 16 16"><path d="M5 1q3 2 6 0l5 3-2 4-2-1v8H4V7L2 8 0 4z"/></svg>
  <svg viewBox="0 0 16 16"><path d="M15 3.500l-3 2-2-1-.500-2L12 .500Q8-.500 7 4v2L.500 12.500q0 3 3 3L10 9q5 0 5-5.500z"/></svg>
</div>
<div class="ball">65</div>
<svg class="mark" viewBox="0 0 198 266" aria-hidden="true"><ellipse cx="99" cy="133" rx="96" ry="130" fill="none" stroke="#f00" stroke-width="3"/></svg>
</body>
</html>
```
FILE: styles.css
```
* { box-sizing: border-box; }
html, body { height: 100%; }
body { margin: 0; display: flex; flex-direction: column; overflow: hidden; position: relative; background: #f0f0f0; color: #000; font: 12px/16px "Noto Sans CJK SC", sans-serif; }
button { margin: 0; padding: 0; border: 0; background: none; font: inherit; color: inherit; white-space: nowrap; }
ul { list-style: none; margin: 0; padding: 0; }
b { font: 10px/16px "DejaVu Sans Mono", monospace; }
.defs { position: absolute; width: 0; height: 0; }
.ic { width: 16px; height: 16px; flex: none; }

.title { display: flex; align-items: center; height: 23px; flex: none; background: #fff; padding-left: 2px; }
.title h1 { flex: 1; margin: 0; padding-left: 5px; font: 12px/16px Inter, "Noto Sans CJK SC", sans-serif; white-space: nowrap; }
.winbtns { display: flex; }
.winbtns button { width: 46px; height: 20px; }
.winbtns svg { width: 12px; height: 12px; }

.menubar { display: flex; align-items: center; height: 31px; flex: none; background: linear-gradient(#fbfbfb, #efefef); white-space: nowrap; }
.menus { display: flex; gap: 11px; padding: 0 7px; }
.menubar button { font-family: "Noto Sans", "Noto Sans CJK SC", sans-serif; }
.tip { margin-left: 31px; color: #2c6400; text-decoration: none; }
.account { margin-left: auto; display: flex; align-items: center; align-self: stretch; width: 240px; }
.account > .ic { margin-left: 4px; }
.more { margin-left: auto; padding: 0 3px; font: bold 15px/14px "Liberation Sans", sans-serif; align-self: flex-start; }

.tb { display: flex; align-items: center; gap: 4px; padding: 0 4px 0 3px; height: 22px; }
.off { color: #7c7c7c; }
.arr { border: 3px solid transparent; border-top-color: currentColor; border-bottom: 0; margin-left: 2px; }
.tight .arr { margin-left: -2px; }
.tb.plain { padding: 0 6px; }
.sep { width: 1px; height: 22px; margin: 0 2px; background: #b4b4b4; }
.toolbars { display: flex; gap: 4px; flex: none; height: 29px; }
.bar { display: flex; align-items: center; padding-left: 1px; background: linear-gradient(#fdfdfd, #efefef); border-radius: 3px; white-space: nowrap; height: 28px; }
.files { flex: 0 0 149px; }
.tools { flex: 0 0 547px; }
.views { flex: 1; }
.tb.boxed { border: 1px solid #777; padding: 0 2px 0 1px; margin-right: 2px; }

.work { flex: 1; min-height: 0; display: flex; padding: 1px 2px 3px 0; }
.nav { flex: 0 0 170px; display: flex; flex-direction: column; }
.nav h2 { display: flex; align-items: center; gap: 8px; margin: 0 0 2px; padding-right: 4px; height: 15px; background: #0654e0; color: #fff; font: 13px/15px "Noto Sans CJK SC", sans-serif; }
.nav h2 svg { width: 10px; height: 10px; }
.nav h2 svg:first-of-type { margin-left: auto; }
.section { height: 22px; flex: none; border: 1px solid #a0a0a0; box-shadow: inset 1px 1px #fff; }
.navtools { display: flex; gap: 7px; align-items: center; height: 28px; padding-left: 7px; background: linear-gradient(#fff, #efefef); }
.treebox { flex: 1; min-height: 0; display: grid; grid-template: minmax(0, 1fr) 16px / minmax(0, 1fr) 16px; margin: 0 2px 2px; border: 1px solid #828790; background: #fff; }
.treeview { overflow: hidden; white-space: nowrap; }
.root { display: flex; align-items: center; height: 16px; }
.chev { width: 10px; height: 10px; margin: 0 7px 0 6px; color: #444; }
.chev.shut { transform: rotate(-90deg); color: #999; }
.root .ic { margin-right: 4px; }
.tree .ic { width: 15px; }
.tree ul { padding-left: 31px; background: repeating-linear-gradient(#888 0 1px, transparent 1px 2px) 12px 0 / 1px 100% no-repeat, repeating-linear-gradient(#888 0 1px, transparent 1px 2px) 31px 0 / 1px calc(100% - 8px) no-repeat; }
.tree ul li, .list li { display: flex; align-items: center; height: 16px; }
.tree ul li::before, .list li::before { content: ""; flex: none; width: 12px; height: 1px; background: repeating-linear-gradient(90deg, #888 0 1px, transparent 1px 2px); }
.tree ul span { padding: 0 4px; height: 16px; }
.tree .cur { background: #d9d9d9; }
.vbar { display: flex; flex-direction: column; align-items: center; width: 16px; padding: 3px 0; background: #f0f0f0; color: #555; }
.vbar svg, .hbar svg { width: 10px; height: 10px; flex: none; }
.u { transform: rotate(180deg); }
.l { transform: rotate(90deg); }
.r { transform: rotate(-90deg); }
.track { flex: 1; align-self: stretch; margin: 4px 0; }
.thumb { background: #cdcdcd; height: 100%; }
.thumb.half { height: 56%; }
.thumb.most { height: 64%; }
.hbar { display: flex; align-items: center; grid-column: 1 / 3; padding: 0 20px 0 5px; background: #f0f0f0; color: #555; }
.hbar .track { margin: 0 6px 0 3px; }

main { flex: 1; min-width: 0; display: flex; flex-direction: column; margin-left: 6px; }
.edit label { padding-left: 1px; }
#floor { appearance: none; width: 62px; height: 22px; margin: 0 3px 0 6px; padding: 0 2px; border: 0; font: inherit; background: conic-gradient(from 315deg at 50% 100%, #000 0 90deg, transparent 0) 52px 10px / 6px 3px no-repeat, #fff; background: conic-gradient(from 315deg at 50% 100%, transparent 0 90deg, #fff 0), #000; background: linear-gradient(#000, #000) 54px 12px / 2px 1px no-repeat, linear-gradient(#000, #000) 53px 11px / 4px 1px no-repeat, linear-gradient(#000, #000) 52px 10px / 6px 1px no-repeat, #fff; }
.panes { flex: 1; min-height: 0; display: flex; gap: 4px; }
.comps { flex: 0 0 184px; display: flex; flex-direction: column; padding-top: 5px; }
.search { display: flex; align-items: center; margin-bottom: 1px; background: #fff; }
.search input { width: 157px; height: 24px; border: 1px solid #7a7a7a; margin-left: 1px; padding: 0 2px; font: inherit; background: #fff; }
.search button { flex: 1; height: 16px; }
input::placeholder { color: #777; opacity: 1; }
.list { flex: 1; border: 1px solid #828790; border-right-width: 2px; background: #fff; padding-top: 2px; }
.list ul { padding-left: 31px; background: repeating-linear-gradient(#888 0 1px, transparent 1px 2px) 31px 0 / 1px calc(100% - 8px) no-repeat; }
.list li::before { width: 9px; }
.list li div { display: flex; align-items: center; gap: 5px; padding: 0 4px 0 2px; height: 16px; }
.list .sel { background: #316ac5; }
.props { flex: 1; min-width: 0; display: flex; flex-direction: column; border: 1px solid #dcdcdc; border-top: 0; background: #fff; }
.tabs { height: 20px; flex: none; background: linear-gradient(#dcdcdc, #dcdcdc) 0 100% / 100% 1px no-repeat, #f0f0f0; }
.tabs button { height: 20px; padding: 0 7px 0 6px; border: 1px solid #dcdcdc; border-width: 1px 1px 0 0; background: #fff; }
.sheet { flex: 1; min-height: 0; display: flex; justify-content: space-between; margin: 4px 0 1px 2px; border: 1px solid #a0a0a0; padding: 1px 4px 1px 1px; }
table { border-collapse: collapse; table-layout: fixed; width: 368px; align-self: flex-start; }
.c1 { width: 20px; } .c2 { width: 191px; } .c3 { width: 126px; } .c4 { width: 31px; }
th, td { height: 19px; padding: 0; border: 1px solid #c0c0c0; font-weight: normal; line-height: 16px; white-space: nowrap; }
thead th { height: 22px; border-top: 0; background: linear-gradient(#fff, #f0f0f0); }
th:first-child { border-left: 0; background: #f4f4f4; font-size: 11px; }
thead .hot { background: linear-gradient(#f9d99f, #f1c15f); color: #5c005c; }
td:nth-child(2) { padding-left: 19px; }
td:nth-child(3) { padding-left: 2px; }
td:nth-child(4) { text-align: center; }
td b { line-height: 14px; }
.blue { color: #00f; }
.active th { background: #ffd58d; color: #800040; }
.active td:nth-child(2) { background: #3399ff; color: #fff; }
.active td:nth-child(3) { background: #e0efff; }
.fold td { color: #808080; }
.fold td:nth-child(2) { padding-left: 2px; }
.fold button { width: 13px; height: 13px; margin-right: 4px; border: 1px solid #c0c0c0; color: #000; font: 13px/10px "Liberation Sans", sans-serif; vertical-align: middle; }
.rb { width: 9px; height: 10px; margin: 0 1px 0 2px; vertical-align: -1px; }
td input { appearance: none; display: block; width: 13px; height: 13px; margin: 0 auto; border: 1px solid #222; background: #fff; }

.status { flex: none; display: flex; gap: 2px; height: 20px; }
.status span { border: 1px solid #d4d4d4; background: linear-gradient(#fff, #f0f0f0); padding: 0 1px; line-height: 18px; white-space: nowrap; overflow: hidden; }
.s1 { flex: 0 0 148px; } .s2 { flex: 0 0 78px; } .s3 { flex: 0 0 98px; } .s4 { flex: 0 0 48px; } .s5 { flex: 1; } .s6 { flex: 0 0 70px; }

.taskbar { flex: none; display: flex; height: 40px; background: #020c0f; color: #fff; }
.start { width: 48px; background: #000; }
.start svg { width: 16px; height: 16px; vertical-align: middle; }
.cortana { flex: 0 0 344px; display: flex; align-items: center; padding: 0 12px 0 9px; background: #333; }
.ring { width: 22px; height: 22px; }
.cortana input { flex: 1; min-width: 0; border: 0; background: none; padding: 0 5px; font: 14px/20px "Noto Sans CJK SC", sans-serif; }
.cortana input::placeholder { color: #999; }
.mic { width: 16px; height: 18px; color: #aaa; }
.app { width: 50px; padding-top: 3px; border-bottom: 3px solid transparent; }
.app svg { width: 24px; height: 24px; vertical-align: middle; }
.run { border-image: linear-gradient(90deg, transparent 5px, #76b9ed 5px 45px, transparent 45px) 3; }
.on { background: #33393b; width: 48px; border-image: none; border-color: #76b9ed; }
.tray { margin-left: auto; display: flex; align-items: center; gap: 8px; padding-right: 16px; font-family: "Open Sans", "Noto Sans CJK SC", sans-serif; }
.tray > svg { width: 16px; height: 16px; }
.tray .kb { width: 24px; }
.two { text-align: center; line-height: 18px; margin: 0 10px; }
.tray .clock { margin: 0 12px 0 8px; }
.zh { font-size: 14px; margin-right: 6px; }
.note { position: relative; width: 26px; height: 22px; }
.note svg { width: 18px; height: 18px; }
.note em { position: absolute; right: 1px; bottom: -4px; width: 16px; height: 16px; border-radius: 8px; background: #333; border: 1px solid #777; font: bold 11px/14px "Open Sans", sans-serif; text-align: center; }

.ime { position: absolute; left: 743px; top: 3px; width: 207px; height: 24px; display: flex; align-items: center; gap: 6px; padding-right: 4px; border: 1px solid #a8c0dc; background: #fbfdff; }
.ime svg { width: 16px; height: 16px; fill: #1f74d0; flex: none; }
.ime .logo { width: 28px; height: 28px; margin: 0 -2px 0 -1px; }
.ime span { color: #1f74d0; font-weight: bold; font-size: 15px; }
.ball { position: absolute; left: 1114px; top: -27px; width: 46px; height: 46px; border: 2px solid #e8e8e8; border-radius: 23px; background: #43c463; box-shadow: 0 0 3px #555; color: #fff; font: bold 11px/14px "Open Sans", sans-serif; text-align: center; padding-top: 25px; }
.mark { position: absolute; left: 501px; top: 82px; width: 198px; height: 266px; pointer-events: none; }
```
